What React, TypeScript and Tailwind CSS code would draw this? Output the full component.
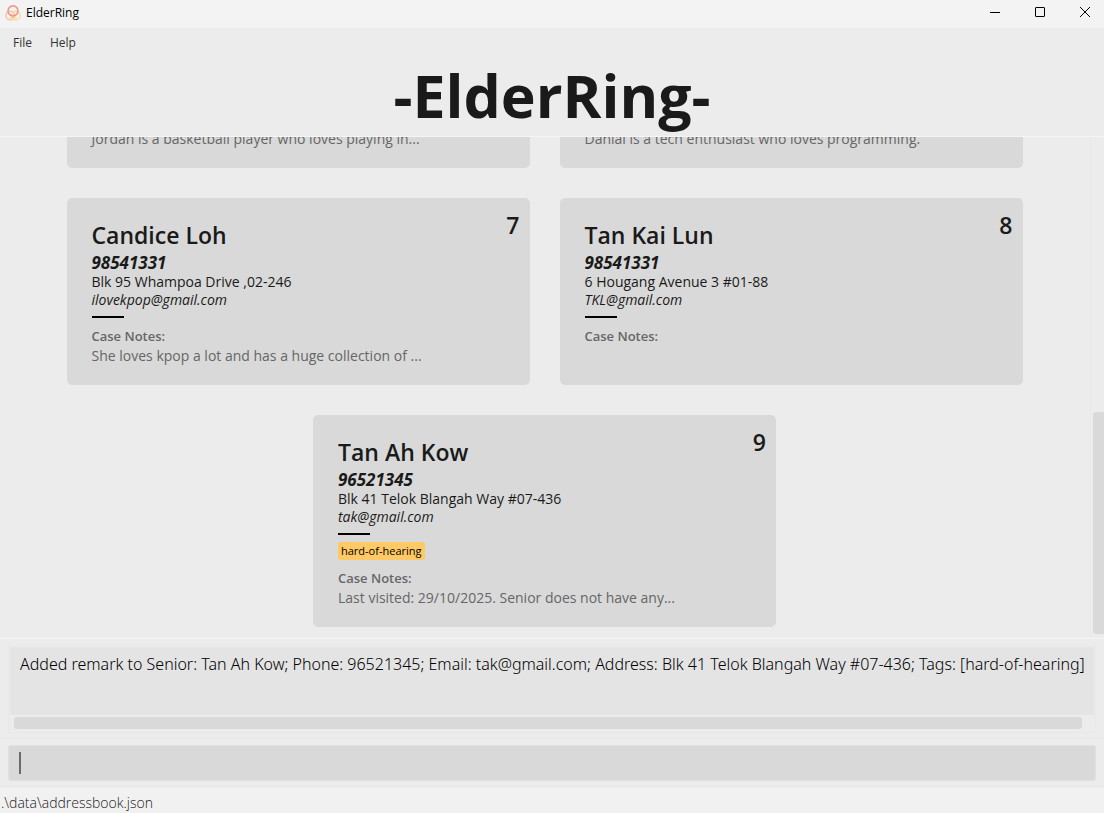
import { useState } from "react";

type Senior = {
  index: number;
  name: string;
  phone: string;
  address: string;
  email: string;
  tags: string[];
  note: string;
};

const seniors: Senior[] = [
  {
    index: 7,
    name: "Candice Loh",
    phone: "98541331",
    address: "Blk 95 Whampoa Drive ,02-246",
    email: "ilovekpop@gmail.com",
    tags: [],
    note: "She loves kpop a lot and has a huge collection of ...",
  },
  {
    index: 8,
    name: "Tan Kai Lun",
    phone: "98541331",
    address: "6 Hougang Avenue 3 #01-88",
    email: "TKL@gmail.com",
    tags: [],
    note: "",
  },
  {
    index: 9,
    name: "Tan Ah Kow",
    phone: "96521345",
    address: "Blk 41 Telok Blangah Way #07-436",
    email: "tak@gmail.com",
    tags: ["hard-of-hearing"],
    note: "Last visited: 29/10/2025. Senior does not have any...",
  },
];

const scrolledNotes = [
  "Jordan is a basketball player who loves playing in...",
  "Danial is a tech enthusiast who loves programming.",
];

function Logo() {
  return (
    <svg viewBox="0 0 16 16" className="size-4" fill="none" aria-hidden="true">
      <circle cx="5.2" cy="10.6" r="4.3" stroke="#f5c4aa" strokeWidth="1.4" />
      <circle cx="10.8" cy="10.6" r="4.3" stroke="#f7dc9a" strokeWidth="1.4" />
      <path d="M4.5 13.4c2-1.8 5-1.8 7 0M5.5 9.5 8 11l2.5-1.5" stroke="#f5cf90" strokeWidth="1.2" />
      <circle cx="8" cy="5.9" r="5" stroke="#f19490" strokeWidth="1.6" />
    </svg>
  );
}

function TitleBar() {
  return (
    <header className="flex h-7 shrink-0 items-start overflow-hidden bg-[#f3f3f3] pl-[5px] text-black">
      <div className="flex items-center gap-[5px]">
        <Logo />
        <span className="text-[12px] leading-[26px]">ElderRing</span>
      </div>
      <div className="-mr-[3px] ml-auto flex">
        <button aria-label="Minimize" className="flex h-6 w-[45px] items-center justify-center">
          <svg viewBox="0 0 10 10" className="size-[10px]" stroke="currentColor">
            <path d="M0 5.5h10" />
          </svg>
        </button>
        <button aria-label="Maximize" className="flex h-6 w-[45px] items-center justify-center">
          <svg viewBox="0 0 10 10" className="size-[10px]" fill="none" stroke="currentColor">
            <rect x=".5" y=".5" width="9" height="9" rx=".5" />
          </svg>
        </button>
        <button aria-label="Close" className="flex h-6 w-[45px] items-center justify-center">
          <svg viewBox="0 0 10 10" className="size-[10px]" stroke="currentColor">
            <path d="m0 0 10 10M10 0 0 10" />
          </svg>
        </button>
      </div>
    </header>
  );
}

function SeniorCard({ senior }: { senior: Senior }) {
  return (
    <article className="flex w-[463px] items-start justify-between rounded-[5px] bg-[#d9d9d9] pr-[10px] pb-[19px] pl-[25px] text-[#1a1a1a]">
      <div className="min-w-0 pt-[21px] text-[14px] leading-[18px]">
        <h2 className="mb-[2px] text-[23px] leading-8 font-semibold">{senior.name}</h2>
        <p className="text-[17px] leading-5 font-bold italic">{senior.phone}</p>
        <p>{senior.address}</p>
        <p className="italic">{senior.email}</p>
        <hr className="mt-[7px] mb-2 w-8 border-t-2 border-black" />
        {senior.tags.length > 0 && (
          <ul className="-mt-px mb-2 flex gap-1">
            {senior.tags.map((tag) => (
              <li key={tag} className="rounded-[2px] bg-[#ffca66] px-[3px] text-[11px] text-black">
                {tag}
              </li>
            ))}
          </ul>
        )}
        <h3 className="text-[13px] leading-5 font-semibold text-[#666666]">Case Notes:</h3>
        <p className="min-h-5 leading-5 text-[#666666]">{senior.note}</p>
      </div>
      <span className="pt-[11px] text-[23px] leading-8 font-semibold">{senior.index}</span>
    </article>
  );
}

export default function App() {
  const [command, setCommand] = useState("");
  return (
    <div className="flex h-screen flex-col overflow-hidden bg-[#ececec] font-['Open_Sans','Noto_Sans',sans-serif] text-[#1a1a1a]">
      <TitleBar />
      <nav className="flex h-[29px] shrink-0 items-center gap-[18px] pl-[13px] text-[12px] text-[#333333]">
        <button>File</button>
        <button>Help</button>
      </nav>
      <h1 className="h-20 shrink-0 border-b border-[#f5f5f5] text-center text-[59px] leading-[76px] font-bold">
        -ElderRing-
      </h1>

      <main className="flex min-h-0 flex-1 border-b border-[#f5f5f5]">
        <div className="flex min-w-0 flex-1 flex-col gap-[30px] overflow-hidden pr-px pb-[11px]">
          <div className="flex min-h-0 flex-1 flex-wrap content-end justify-center gap-[30px] overflow-hidden">
            {scrolledNotes.map((note) => (
              <p
                key={note}
                className="w-[463px] rounded-b-[5px] bg-[#d9d9d9] pb-[19px] pl-[25px] text-[14px] leading-5 text-[#666666]"
              >
                {note}
              </p>
            ))}
          </div>
          <div className="flex shrink-0 flex-wrap justify-center gap-[30px]">
            {seniors.map((senior) => (
              <SeniorCard key={senior.index} senior={senior} />
            ))}
          </div>
        </div>
        <div className="flex w-[14px] shrink-0 flex-col justify-end border-l border-[#e8e8e8] pb-1 pl-[2px]">
          <div className="h-[222px] rounded-l-[3px] bg-[#d9d9d9]" />
        </div>
      </main>

      <section className="shrink-0 border-b border-[#e8e8e8] px-2 pt-[6px] pb-[5px]">
        <div className="border border-[#e8e8e8] px-px pt-px pb-[3px]">
          <output className="block h-[68px] overflow-hidden bg-[#e4e4e4] pt-[5px] pl-[10px] font-['Noto_Sans','Open_Sans',sans-serif] text-[16px] leading-6 font-light whitespace-nowrap text-black">
            Added remark to Senior: Tan Ah Kow; Phone: 96521345; Email: tak@gmail.com; Address: Blk 41 Telok Blangah Way
            #07-436; Tags: [hard-of-hearing]
          </output>
          <div className="mt-[2px] mr-3 ml-1 h-3 rounded-[3px] bg-[#d9d9d9]" />
        </div>
      </section>

      <div className="shrink-0 border-b border-[#e6e6e6] px-2 pt-[6px] pb-[5px]">
        <input
          aria-label="Command"
          autoFocus
          value={command}
          onChange={(event) => setCommand(event.target.value)}
          className="block h-9 w-full rounded-[3px] border border-[#e0e0e0] bg-[#d9d9d9] px-[10px] text-[17px] font-light caret-transparent outline-none"
        />
        <div className="relative">
          <span className="absolute bottom-[7px] left-[11px] h-[22px] w-[2px] bg-[#6b6b6b]" />
        </div>
      </div>

      <footer className="h-[26px] shrink-0 bg-[#f1f1f1] pl-px text-[14px] leading-8 font-light">
        .\data\addressbook.json
      </footer>
    </div>
  );
}
